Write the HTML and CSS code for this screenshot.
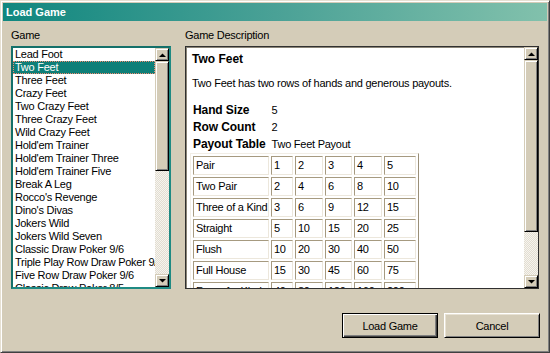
FILE: index.html
```html
<!DOCTYPE html>
<html lang="en">
<head>
    <meta charset="UTF-8">
    <title>Load Game</title>
    <link rel="stylesheet" href="styles.css">
</head>
<body>
    <div class="window">
        <div class="titlebar">Load Game</div>
        <div class="content">
            <div class="columns">
                <div class="col col-list">
                    <div class="label">Game</div>
                    <div class="listbox">
                        <ul class="items">
                            <li>Lead Foot</li>
                            <li class="selected">Two Feet</li>
                            <li>Three Feet</li>
                            <li>Crazy Feet</li>
                            <li>Two Crazy Feet</li>
                            <li>Three Crazy Feet</li>
                            <li>Wild Crazy Feet</li>
                            <li>Hold'em Trainer</li>
                            <li>Hold'em Trainer Three</li>
                            <li>Hold'em Trainer Five</li>
                            <li>Break A Leg</li>
                            <li>Rocco's Revenge</li>
                            <li>Dino's Divas</li>
                            <li>Jokers Wild</li>
                            <li>Jokers Wild Seven</li>
                            <li>Classic Draw Poker 9/6</li>
                            <li>Triple Play Row Draw Poker 9/6</li>
                            <li>Five Row Draw Poker 9/6</li>
                            <li>Classic Draw Poker 8/5</li>
                        </ul>
                        <div class="scrollbar">
                            <div class="sb-btn"><svg width="7" height="4" viewBox="0 0 7 4"><polygon points="0,4 7,4 3.5,0.5" fill="#000"/></svg></div>
                            <div class="sb-thumb list-thumb"></div>
                            <div class="sb-track"></div>
                            <div class="sb-btn"><svg width="7" height="4" viewBox="0 0 7 4"><polygon points="0,0 7,0 3.5,3.5" fill="#000"/></svg></div>
                        </div>
                    </div>
                </div>
                <div class="col col-desc">
                    <div class="label">Game Description</div>
                    <div class="panel">
                        <div class="panel-body">
                            <div class="game-title">Two Feet</div>
                            <p class="game-text">Two Feet has two rows of hands and generous payouts.</p>
                            <table class="info">
                                <tr><th>Hand Size</th><td>5</td></tr>
                                <tr><th>Row Count</th><td>2</td></tr>
                                <tr><th>Payout Table</th><td>Two Feet Payout</td></tr>
                            </table>
                            <table class="payout">
                                <tr><td>Pair</td><td>1</td><td>2</td><td>3</td><td>4</td><td>5</td></tr>
                                <tr><td>Two Pair</td><td>2</td><td>4</td><td>6</td><td>8</td><td>10</td></tr>
                                <tr><td>Three of a Kind</td><td>3</td><td>6</td><td>9</td><td>12</td><td>15</td></tr>
                                <tr><td>Straight</td><td>5</td><td>10</td><td>15</td><td>20</td><td>25</td></tr>
                                <tr><td>Flush</td><td>10</td><td>20</td><td>30</td><td>40</td><td>50</td></tr>
                                <tr><td>Full House</td><td>15</td><td>30</td><td>45</td><td>60</td><td>75</td></tr>
                                <tr><td>Four of a Kind</td><td>40</td><td>80</td><td>120</td><td>160</td><td>200</td></tr>
                            </table>
                        </div>
                        <div class="scrollbar">
                            <div class="sb-btn"><svg width="7" height="4" viewBox="0 0 7 4"><polygon points="0,4 7,4 3.5,0.5" fill="#000"/></svg></div>
                            <div class="sb-thumb panel-thumb"></div>
                            <div class="sb-track"></div>
                            <div class="sb-btn"><svg width="7" height="4" viewBox="0 0 7 4"><polygon points="0,0 7,0 3.5,3.5" fill="#000"/></svg></div>
                        </div>
                    </div>
                </div>
            </div>
            <div class="actions">
                <button class="btn default">Load Game</button>
                <button class="btn">Cancel</button>
            </div>
        </div>
    </div>
</body>
</html>
```
FILE: styles.css
```css
* {
    margin: 0;
    padding: 0;
    box-sizing: border-box;
}
body {
    background: #d4ccb8;
    font-family: "Liberation Sans", Arial, sans-serif;
    font-size: 11px;
    letter-spacing: -0.25px;
    color: #000;
}
.window {
    width: 550px;
    height: 353px;
    padding: 2px;
    background: #d4ccb8;
    border: 1px solid;
    border-color: #e6e0d2 #404040 #404040 #e6e0d2;
    box-shadow: inset 1px 1px 0 #fff, inset -1px -1px 0 #808080;
}
.titlebar {
    height: 18px;
    line-height: 18px;
    padding-left: 3px;
    color: #fff;
    font-weight: bold;
    font-size: 11px;
    letter-spacing: 0;
    background: linear-gradient(to right, #10877f, #4aa196 50%, #82c1ac);
}
.content {
    padding: 8px 8px 0 8px;
}
.columns {
    display: flex;
}
.col-list {
    width: 160px;
    margin-right: 14px;
}
.col-desc {
    width: 354px;
}
.label {
    height: 13px;
    line-height: 13px;
    margin-bottom: 4px;
}

/* list box */
.listbox {
    display: flex;
    height: 243px;
    background: #fff;
    border: 2px solid;
    border-color: #14706a #1f8a83 #1f8a83 #14706a;
}
.items {
    flex: 1;
    list-style: none;
    overflow: hidden;
}
.items li {
    height: 13px;
    line-height: 13px;
    padding-left: 2px;
    white-space: nowrap;
    overflow: hidden;
}
.items .selected {
    background: #0e7f78;
    color: #fff;
    outline: 1px dotted #f08a70;
    outline-offset: -1px;
}

/* scrollbars */
.scrollbar {
    display: flex;
    flex-direction: column;
    width: 14px;
    flex-shrink: 0;
}
.sb-btn,
.sb-thumb {
    background: #d4ccb8;
    border: 1px solid;
    border-color: #d4ccb8 #000 #000 #d4ccb8;
    box-shadow: inset 1px 1px 0 #fff, inset -1px -1px 0 #808080;
}
.sb-btn {
    height: 13px;
    display: flex;
    align-items: center;
    justify-content: center;
}
.list-thumb {
    height: 110px;
}
.panel-thumb {
    height: 172px;
}
.sb-track {
    flex: 1;
    background: repeating-conic-gradient(#e2ddd1 0 25%, #f6f4ef 0 50%) 0 0 / 2px 2px;
}

/* description panel */
.panel {
    display: flex;
    height: 243px;
    background: #fff;
    border: 1px solid #303030;
    box-shadow: inset 1px 1px 0 #8a8578;
}
.panel-body {
    flex: 1;
    overflow: hidden;
    padding: 5px 0 0 4px;
}
.game-title {
    font-size: 12px;
    font-weight: bold;
    letter-spacing: 0;
    line-height: 14px;
    padding-left: 2px;
}
.game-text {
    line-height: 13px;
    margin-top: 11px;
    margin-bottom: 12px;
    padding-left: 2px;
}
.info {
    border-collapse: collapse;
}
.info th,
.info td {
    height: 17px;
    line-height: 17px;
    padding: 0 3px;
    text-align: left;
    white-space: nowrap;
}
.info th {
    width: 78px;
    font-size: 12px;
    letter-spacing: -0.1px;
}
.payout {
    width: 229px;
    table-layout: fixed;
    border-collapse: separate;
    border-spacing: 2px;
    border: 1px solid;
    border-color: #f2eee6 #9a8f78 #9a8f78 #f2eee6;
}
.payout td {
    height: 19px;
    line-height: 13px;
    padding: 0 2px;
    border: 1px solid;
    border-color: #a69a80 #ece7dc #ece7dc #a69a80;
    white-space: nowrap;
    overflow: hidden;
}
.payout td:nth-child(1) { width: 76px; }
.payout td:nth-child(2) { width: 22px; }
.payout td:nth-child(3) { width: 28px; }
.payout td:nth-child(4) { width: 27px; }
.payout td:nth-child(5) { width: 28px; }
.payout td:nth-child(6) { width: 32px; }

/* buttons */
.actions {
    display: flex;
    justify-content: flex-end;
    gap: 6px;
    margin-top: 24px;
    margin-right: -1px;
}
.btn {
    width: 96px;
    height: 25px;
    font-family: "Liberation Sans", Arial, sans-serif;
    font-size: 11px;
    letter-spacing: -0.25px;
    color: #000;
    background: #d4ccb8;
    border: 1px solid;
    border-color: #fff #000 #000 #fff;
    box-shadow: inset 1px 1px 0 #e8e2d4, inset -1px -1px 0 #808080;
}
.btn.default {
    border: 1px solid #000;
    box-shadow: inset 1px 1px 0 #fff, inset -1px -1px 0 #404040, inset -2px -2px 0 #808080;
}
```
